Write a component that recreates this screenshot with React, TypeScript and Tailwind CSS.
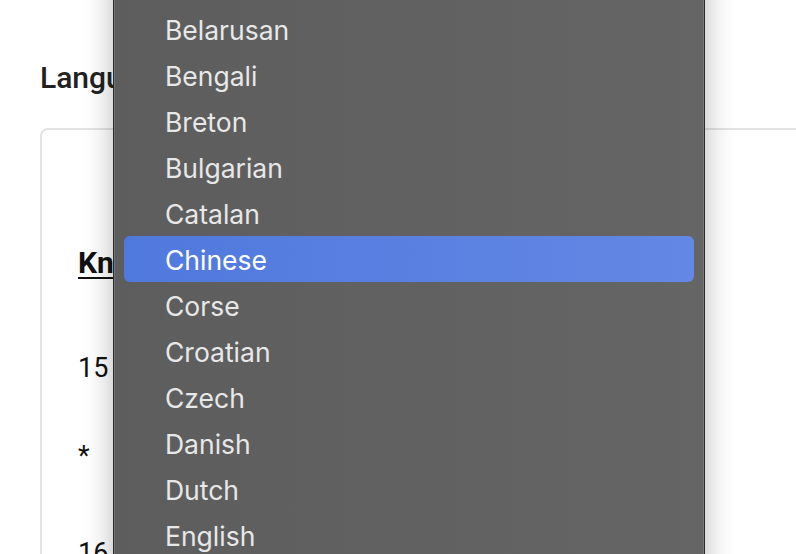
import React from "react";

const languages = [
  "Azerbaijani",
  "Basque",
  "Belarusan",
  "Bengali",
  "Breton",
  "Bulgarian",
  "Catalan",
  "Chinese",
  "Corse",
  "Croatian",
  "Czech",
  "Danish",
  "Dutch",
  "English",
  "Esperanto",
];

const selected = "Chinese";

const App = () => {
  return (
    <div className="relative h-[554px] w-full overflow-hidden bg-white">
      {/* page behind the menu */}
      <div className="w-[900px] px-10 font-['Roboto',sans-serif] text-[#111]">
        <h2 className="mt-[60px] text-[30px] font-medium leading-[36px] text-[#222]">
          Language
        </h2>
        <div className="mt-[32px] h-[600px] rounded-lg border-2 border-[#e3e3e3] pl-[36px] pt-[115px]">
          <h3 className="text-[30px] font-bold leading-[36px] underline decoration-2 underline-offset-[4px]">
            Knowledge base
          </h3>
          <p className="mt-[69px] text-[27px] leading-[36px]">15</p>
          <p className="mt-[52px] text-[27px] leading-[36px]">*</p>
          <p className="mt-[61px] text-[27px] leading-[36px]">16</p>
        </div>
      </div>

      {/* native select dropdown */}
      <div className="absolute left-[113px] top-[-98px] h-[800px] w-[592px] border border-[#2a2a2a] bg-linear-to-r from-[#5d5d5d] to-[#656565] px-[10px] pt-[11px] font-['Inter',sans-serif] shadow-[inset_0_0_0_1px_rgba(255,255,255,0.14),0_6px_28px_rgba(0,0,0,0.28)]">
        {languages.map((lang) => (
          <div
            key={lang}
            className={
              lang === selected
                ? "h-[46px] rounded-[6px] bg-linear-to-r from-[#5079de] to-[#6387e4] pl-[41px] text-[26.5px] leading-[48px] text-white"
                : "h-[46px] pl-[41px] text-[26.5px] leading-[48px] text-[#e8e8e8]"
            }
          >
            {lang}
          </div>
        ))}
      </div>
    </div>
  );
};

export default App;
